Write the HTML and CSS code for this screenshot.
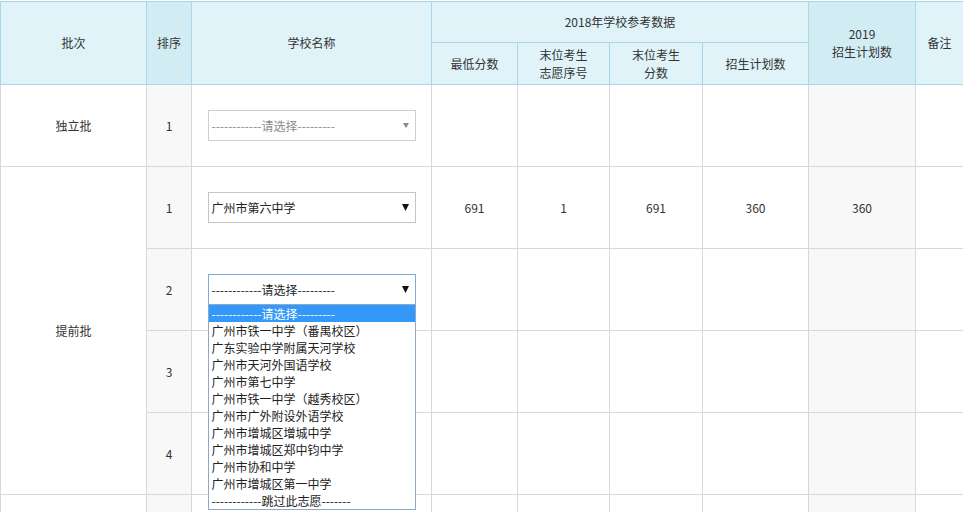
FILE: index.html
```html
<!DOCTYPE html>
<html lang="zh-CN">
<head>
<meta charset="utf-8">
<title>志愿填报</title>
<link rel="stylesheet" href="styles.css">
</head>
<body>
<div class="page">
<table class="plan">
  <colgroup>
    <col class="c-batch"><col class="c-order"><col class="c-school">
    <col class="c-min"><col class="c-rank"><col class="c-score"><col class="c-plan18">
    <col class="c-plan19"><col class="c-note">
  </colgroup>
  <thead>
    <tr class="h1">
      <th rowspan="2">批次</th>
      <th rowspan="2" class="dark">排序</th>
      <th rowspan="2">学校名称</th>
      <th colspan="4">2018年学校参考数据</th>
      <th rowspan="2" class="dark">2019<br>招生计划数</th>
      <th rowspan="2">备注</th>
    </tr>
    <tr class="h2">
      <th>最低分数</th>
      <th>末位考生<br>志愿序号</th>
      <th>末位考生<br>分数</th>
      <th>招生计划数</th>
    </tr>
  </thead>
  <tbody>
    <tr class="r first">
      <td>独立批</td>
      <td class="gray">1</td>
      <td><div class="sel disabled"><span class="txt">------------请选择---------</span><svg class="arr" width="6" height="5" viewBox="0 0 6 5"><path d="M0 0H6L3 5Z"/></svg></div></td>
      <td></td><td></td><td></td><td></td><td class="gray"></td><td></td>
    </tr>
    <tr class="r">
      <td rowspan="4">提前批</td>
      <td class="gray">1</td>
      <td><div class="sel"><span class="txt">广州市第六中学</span><svg class="arr" width="7" height="7" viewBox="0 0 7 7"><path d="M0 0H7L3.5 7Z"/></svg></div></td>
      <td>691</td><td>1</td><td>691</td><td>360</td><td class="gray">360</td><td></td>
    </tr>
    <tr class="r">
      <td class="gray">2</td>
      <td>
        <div class="sel focus"><span class="txt">------------请选择---------</span><svg class="arr" width="7" height="7" viewBox="0 0 7 7"><path d="M0 0H7L3.5 7Z"/></svg>
          <ul class="menu">
            <li class="active">------------请选择---------</li>
            <li>广州市铁一中学（番禺校区）</li>
            <li>广东实验中学附属天河学校</li>
            <li>广州市天河外国语学校</li>
            <li>广州市第七中学</li>
            <li>广州市铁一中学（越秀校区）</li>
            <li>广州市广外附设外语学校</li>
            <li>广州市增城区增城中学</li>
            <li>广州市增城区郑中钧中学</li>
            <li>广州市协和中学</li>
            <li>广州市增城区第一中学</li>
            <li>------------跳过此志愿-------</li>
          </ul>
        </div>
      </td>
      <td></td><td></td><td></td><td></td><td class="gray"></td><td></td>
    </tr>
    <tr class="r">
      <td class="gray">3</td>
      <td></td>
      <td></td><td></td><td></td><td></td><td class="gray"></td><td></td>
    </tr>
    <tr class="r">
      <td class="gray">4</td>
      <td></td>
      <td></td><td></td><td></td><td></td><td class="gray"></td><td></td>
    </tr>
    <tr class="r">
      <td></td>
      <td class="gray"></td>
      <td></td>
      <td></td><td></td><td></td><td></td><td class="gray"></td><td></td>
    </tr>
  </tbody>
</table>
</div>
</body>
</html>
```
FILE: styles.css
```css
html, body {
  margin: 0;
  padding: 0;
  background: #fff;
}
body {
  font-family: "Microsoft YaHei", "Noto Sans CJK SC", "Noto Sans", sans-serif;
  font-size: 12px;
  color: #333;
}
.page {
  padding-top: 1px;
  overflow: hidden;
  height: 511px;
}
.plan {
  border-collapse: collapse;
  table-layout: fixed;
  width: 963px;
}
.c-batch { width: 146px; }
.c-order { width: 45px; }
.c-school { width: 240px; }
.c-min { width: 86px; }
.c-rank { width: 92px; }
.c-score { width: 93px; }
.c-plan18 { width: 106px; }
.c-plan19 { width: 107px; }
.c-note { width: 48px; }

.plan th {
  background: #dff3f9;
  border: 1px solid #a8d7e9;
  font-weight: normal;
  line-height: 18px;
  padding: 0;
  text-align: center;
  vertical-align: middle;
}
.plan th.dark {
  background: #d2ecf4;
}
.plan .h1 { height: 41px; }
.plan .h2 { height: 42px; }

.plan td {
  border: 1px solid #d8d8d8;
  padding: 0;
  text-align: center;
  vertical-align: middle;
}
.plan td.gray {
  background: #f8f8f8;
}
.plan .r { height: 82px; }
.plan .r.first { height: 82px; }

.sel {
  position: relative;
  box-sizing: border-box;
  width: 208px;
  height: 31px;
  margin: 0 auto;
  border: 1px solid #c6c6c6;
  background: #fff;
  display: flex;
  align-items: center;
  justify-content: space-between;
  padding: 0 6px 0 3px;
  text-align: left;
  color: #222;
}
.sel .arr { fill: #111; }
.sel.disabled { border-color: #cfcfcf; color: #8c8c8c; }
.sel.disabled .arr { fill: #8a8a8a; }
.sel.focus { border-color: #7aa9e3; }
.txt { white-space: nowrap; }

.menu {
  position: absolute;
  z-index: 10;
  left: -1px;
  right: -1px;
  top: 100%;
  margin: 0;
  padding: 0;
  list-style: none;
  background: #fff;
  border: 1px solid #8fa8c8;
}
.menu li {
  height: 17px;
  line-height: 17px;
  padding-left: 3px;
  white-space: nowrap;
  color: #222;
}
.menu li.active {
  background: #3398f8;
  color: #fff;
}
```
